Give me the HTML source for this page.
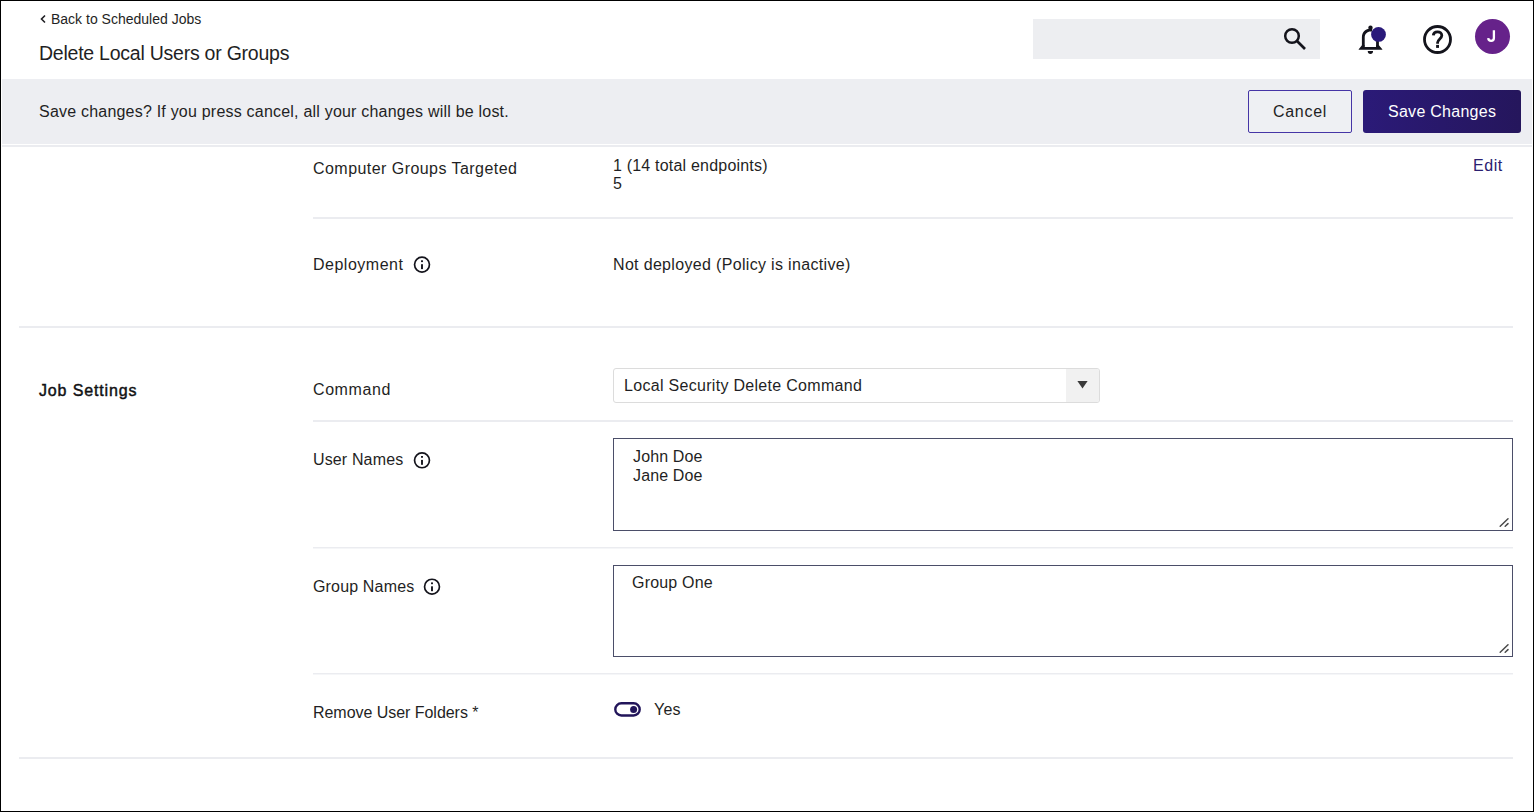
<!DOCTYPE html>
<html>
<head>
<meta charset="utf-8">
<style>
html,body{margin:0;padding:0;width:1534px;height:812px;overflow:hidden;background:#fff;}
body{position:relative;font-family:"Liberation Sans",sans-serif;color:#1f1f24;}
.a{position:absolute;white-space:pre;}
.t16{font-size:16px;line-height:16px;}
.frame{position:absolute;left:0;top:0;width:1532px;height:810px;border:1px solid #000;pointer-events:none;z-index:10;}
.line{position:absolute;background:#ebecf0;}
.ta{position:absolute;border:1px solid #4b4e69;background:#fff;box-sizing:border-box;}
svg{position:absolute;overflow:visible;}
</style>
</head>
<body>
<!-- header -->
<svg style="left:0;top:0" width="1534" height="80">
  <polyline points="45,15.5 41.5,19 45,22.5" fill="none" stroke="#1f1f24" stroke-width="1.6"/>
</svg>
<div class="a" style="left:51px;top:12px;font-size:14px;line-height:14px;">Back to Scheduled Jobs</div>
<div class="a" style="left:39px;top:44px;font-size:19.5px;line-height:19px;letter-spacing:-0.24px;">Delete Local Users or Groups</div>

<div class="a" style="left:1033px;top:19px;width:287px;height:40px;background:#edeef1;"></div>
<svg style="left:0;top:0" width="1534" height="80">
  <circle cx="1292" cy="36" r="6.8" fill="none" stroke="#14141c" stroke-width="2.5"/>
  <line x1="1297" y1="41" x2="1305" y2="49" stroke="#14141c" stroke-width="2.6"/>
</svg>


<!-- bell -->
<svg style="left:0;top:0" width="1534" height="80">
  <g fill="#14141c">
    <circle cx="1370.5" cy="27.8" r="2.2"/>
    <path d="M1361.9,46.5 V37.5 C1361.9,32.2 1365.5,28.6 1370.5,28.6 L1372,28.6 L1372,31.4 L1370.5,31.4 C1367.3,31.4 1364.7,33.8 1364.7,37.5 V46.5 Z"/>
    <rect x="1376.1" y="37" width="2.8" height="10"/>
    <path d="M1362,45.3 L1364.7,45.3 L1364.7,46.9 L1376.1,46.9 L1376.1,45.3 L1378.9,45.3 L1382.3,49.2 L1382.3,49.8 L1358.7,49.8 L1358.7,49.2 Z"/>
    <path d="M1367.8,51 H1373 V51.8 C1373,53 1372,53.9 1370.4,53.9 C1368.8,53.9 1367.8,53 1367.8,51.8 Z"/>
  </g>
  <circle cx="1378.5" cy="34.4" r="7.4" fill="#2a1a7a"/>
</svg>
<!-- help -->
<svg style="left:0;top:0" width="1534" height="80">
  <circle cx="1437.5" cy="39.5" r="13" fill="none" stroke="#14141c" stroke-width="2.8"/>
  <path d="M1433.3,35.4 C1433.5,32.9 1435.3,31.8 1437.5,31.8 C1440,31.8 1441.8,33.4 1441.8,35.6 C1441.8,38.5 1437.6,39.4 1437.6,42.6 V43.8" fill="none" stroke="#14141c" stroke-width="2.8"/>
  <rect x="1436.1" y="44.9" width="2.9" height="3" fill="#14141c"/>
</svg>
<!-- avatar -->
<div class="a" style="left:1475px;top:19px;width:35px;height:35px;border-radius:50%;background:#66228a;"></div>
<svg style="left:0;top:0" width="1" height="1"><path d="M1493.9,30.2 V38 C1493.9,40.2 1492.7,40.9 1491.1,40.9 C1489.4,40.9 1488.4,40 1488.2,38.2" fill="none" stroke="#fff" stroke-width="2.3"/></svg>

<!-- notification bar -->
<div class="a" style="left:2px;top:79px;width:1530px;height:65px;background:#edeef2;"></div>
<div class="a" style="left:2px;top:145px;width:1530px;height:2px;background:#ebecf0;"></div>
<div class="a t16" style="left:39px;top:104px;letter-spacing:0.21px;">Save changes? If you press cancel, all your changes will be lost.</div>


<!-- section 1 -->
<div class="a t16" style="left:313px;top:161px;letter-spacing:0.45px;">Computer Groups Targeted</div>
<div class="a t16" style="left:613px;top:158px;letter-spacing:0.2px;">1 (14 total endpoints)</div>
<div class="a t16" style="left:613px;top:176px;">5</div>
<div class="a t16" style="left:1473px;top:158px;letter-spacing:0.55px;color:#2b2070;">Edit</div>
<div class="line" style="left:313px;top:217px;width:1200px;height:2px;"></div>
<div class="a t16" style="left:313px;top:257px;letter-spacing:0.5px;">Deployment</div>
<svg style="left:0;top:0" width="1" height="1"><circle cx="422.0" cy="264.6" r="7.45" fill="none" stroke="#14141c" stroke-width="1.7"/><rect x="421.05" y="260.30" width="1.9" height="1.8" fill="#14141c"/><rect x="421.05" y="264.20" width="1.9" height="4.9" fill="#14141c"/></svg>
<div class="a t16" style="left:613px;top:257px;letter-spacing:0.33px;">Not deployed (Policy is inactive)</div>
<div class="line" style="left:19px;top:326px;width:1494px;height:2px;"></div>

<!-- job settings -->
<div class="a t16" style="left:39px;top:383px;font-weight:400;-webkit-text-stroke:0.45px #111114;letter-spacing:0.85px;color:#111114;">Job Settings</div>
<div class="a t16" style="left:313px;top:382px;letter-spacing:0.58px;">Command</div>
<div class="a" style="left:613px;top:368px;width:487px;height:35px;box-sizing:border-box;border:1px solid #dcdcdc;border-radius:3px;background:#fff;overflow:hidden;">
  <div style="position:absolute;right:0;top:0;width:33px;height:33px;background:#f1f1f1;"></div>
</div>
<svg style="left:0;top:0" width="1" height="1"><polygon points="1077.4,381 1087.6,381 1082.5,388.6" fill="#3a3a3a"/></svg>
<div class="a t16" style="left:624px;top:378px;letter-spacing:0.3px;">Local Security Delete Command</div>
<div class="line" style="left:313px;top:420px;width:1200px;height:2px;"></div>

<div class="a t16" style="left:313px;top:452px;letter-spacing:0.14px;">User Names</div>
<svg style="left:0;top:0" width="1" height="1"><circle cx="422.0" cy="460.3" r="7.45" fill="none" stroke="#14141c" stroke-width="1.7"/><rect x="421.05" y="456.00" width="1.9" height="1.8" fill="#14141c"/><rect x="421.05" y="459.90" width="1.9" height="4.9" fill="#14141c"/></svg>
<div class="ta" style="left:613px;top:438px;width:900px;height:93px;"></div>
<div class="a t16" style="left:633px;top:447px;letter-spacing:0.14px;line-height:19px;">John Doe
Jane Doe</div>
<svg style="left:0;top:0" width="1" height="1"><path d="M1500.2,526.2 L1508,518.8 M1505.2,526.2 L1508,523.6" stroke="#4a4a4a" stroke-width="1.5" stroke-linecap="round" fill="none"/></svg>
<div class="line" style="left:313px;top:547px;width:1200px;height:1px;"></div><div class="line" style="left:313px;top:548px;width:1200px;height:1px;background:#f5f6f8;"></div>

<div class="a t16" style="left:313px;top:579px;letter-spacing:0.16px;">Group Names</div>
<svg style="left:0;top:0" width="1" height="1"><circle cx="432.0" cy="586.7" r="7.45" fill="none" stroke="#14141c" stroke-width="1.7"/><rect x="431.05" y="582.40" width="1.9" height="1.8" fill="#14141c"/><rect x="431.05" y="586.30" width="1.9" height="4.9" fill="#14141c"/></svg>
<div class="ta" style="left:613px;top:565px;width:900px;height:92px;"></div>
<div class="a t16" style="left:632px;top:575px;letter-spacing:0.2px;">Group One</div>
<svg style="left:0;top:0" width="1" height="1"><path d="M1500.2,652.2 L1508,644.8 M1505.2,652.2 L1508,649.6" stroke="#4a4a4a" stroke-width="1.5" stroke-linecap="round" fill="none"/></svg>
<div class="line" style="left:313px;top:673px;width:1200px;height:1px;"></div><div class="line" style="left:313px;top:674px;width:1200px;height:1px;background:#f5f6f8;"></div>

<div class="a t16" style="left:313px;top:705px;letter-spacing:-0.04px;">Remove User Folders *</div>
<svg style="left:0;top:0" width="1" height="1">
  <rect x="615.3" y="703.3" width="24.4" height="12.2" rx="6.1" fill="none" stroke="#22155a" stroke-width="2.4"/>
  <circle cx="633.6" cy="709.4" r="3.5" fill="#22155a"/>
</svg>
<div class="a t16" style="left:654px;top:702px;letter-spacing:0.25px;">Yes</div>
<div class="line" style="left:19px;top:757px;width:1494px;height:2px;"></div>

<div class="a" style="left:1248px;top:90px;width:104px;height:43px;box-sizing:border-box;border:1px solid #4535a6;border-radius:2px;background:#eef0f3;"></div>
<div class="a t16" style="left:1273px;top:104px;letter-spacing:0.7px;">Cancel</div>
<div class="a" style="left:1363px;top:90px;width:158px;height:43px;border-radius:3px;background:linear-gradient(90deg,#2b1a78,#25165c);"></div>
<div class="a t16" style="left:1388px;top:104px;letter-spacing:0.27px;color:#fff;">Save Changes</div>

<div class="frame"></div>
</body>
</html>
